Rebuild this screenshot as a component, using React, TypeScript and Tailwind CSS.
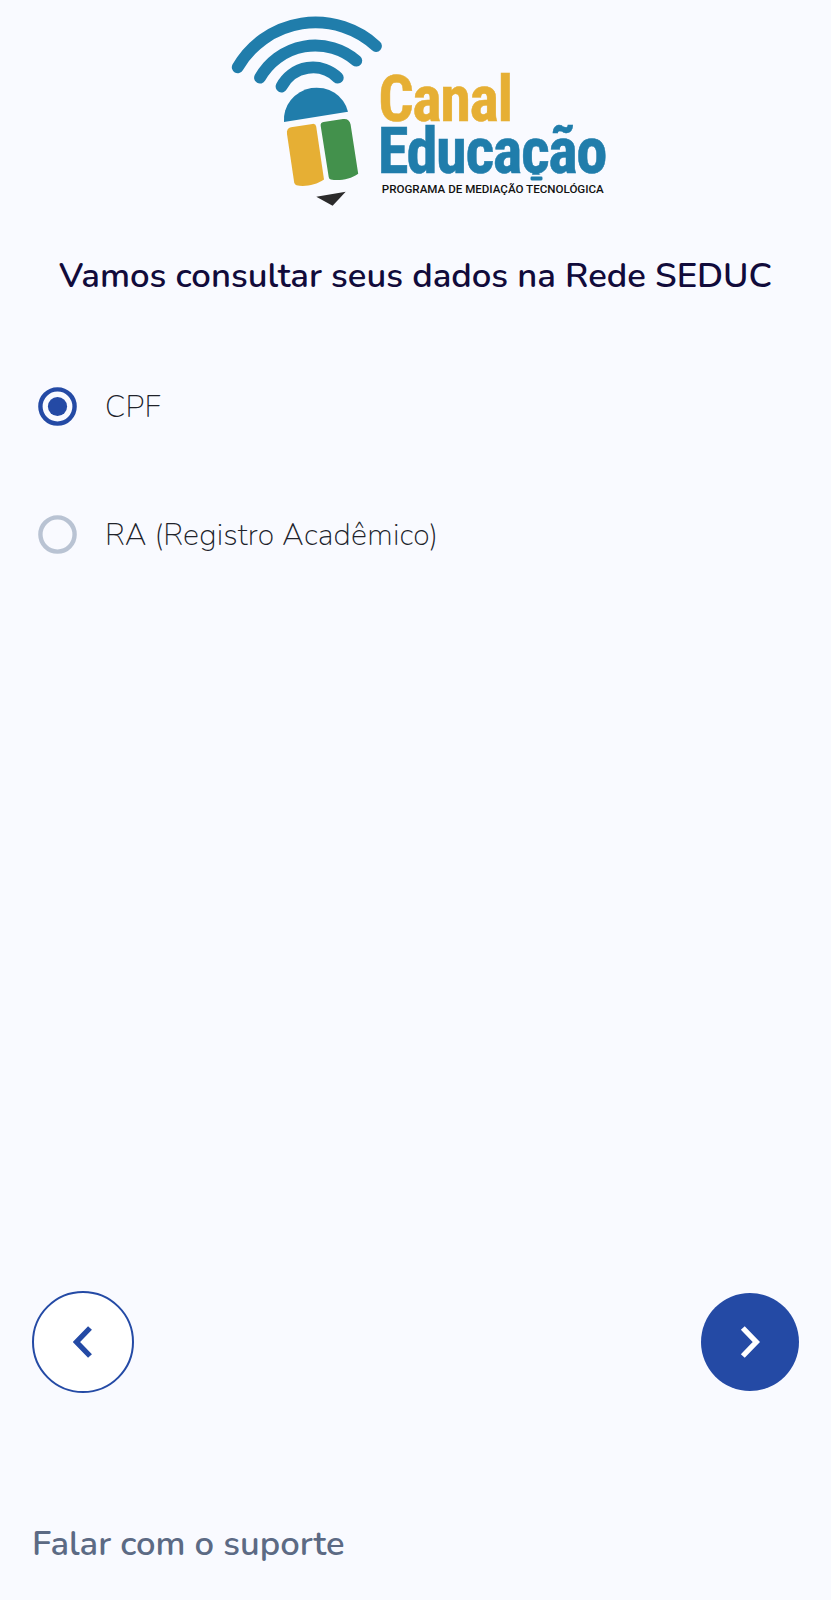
import { useState } from 'react';

interface RadioOptionProps {
  label: string;
  checked: boolean;
  onSelect: () => void;
}

function Logo() {
  return (
    <svg viewBox="225 10 390 204" className="h-[204px] w-[390px] overflow-visible" role="img" aria-label="Canal Educação">
      <defs>
        <clipPath id="wordmark">
          <rect x="370" y="60" width="245" height="114.8" />
        </clipPath>
      </defs>
      {/* Signal waves */}
      <g fill="none" stroke="#207dab" strokeWidth="11.8" strokeLinecap="round">
        <path d="M237.7 67.3A89.8 89.8 0 0 1 376 46" />
        <path d="M260 77.7A63.4 63.4 0 0 1 356.3 60.7" />
        <path d="M281.5 86.5A35.5 35.5 0 0 1 337.8 77.7" />
      </g>
      {/* Pencil */}
      <path d="M284 122.1A32.5 31.4 -9.2 0 1 348 111.7Z" fill="#207dab" />
      <path d="M291 127.3L312.5 123.9Q315.7 123.5 316.2 126.5L324 179.5C316 185 305 187 296.5 185.3Q294.6 184.8 294.2 182.5L287 134Q286.2 128.4 291 127.3Z" fill="#e6af34" />
      <path d="M323.5 122L343 119Q349.5 118.3 350.6 124.5L358.2 173.7C350.5 179.5 339 181 330.8 179.5Q329 179 328.7 177L320.7 126Q320.2 122.5 323.5 122Z" fill="#43914c" />
      <path d="M316.3 196.7L345.7 191.8L332.6 205.8Z" fill="#2b2a2b" />
      {/* Wordmark */}
      <g fontFamily="Roboto, sans-serif">
        <g className="[font-stretch:75%] tracking-[-1.5px]" fontSize="65" fontWeight="700" strokeWidth="0.5" clipPath="url(#wordmark)">
          <text x="378.3" y="121.3" fill="#e6af34" stroke="#e6af34" textLength="133.4" lengthAdjust="spacingAndGlyphs">Canal</text>
          <text x="377.8" y="173.4" fill="#207dab" stroke="#207dab" textLength="228.3" lengthAdjust="spacingAndGlyphs">Educação</text>
        </g>
        {/* Cedilla */}
        <rect x="530.5" y="176.6" width="12" height="3.8" rx="1.3" fill="#207dab" />
        <text x="381.8" y="193.3" fontSize="11.8" fontWeight="500" fill="#111111" textLength="222" lengthAdjust="spacingAndGlyphs">PROGRAMA DE MEDIAÇÃO TECNOLÓGICA</text>
      </g>
    </svg>
  );
}

function RadioOption({ label, checked, onSelect }: RadioOptionProps) {
  return (
    <button type="button" role="radio" aria-checked={checked} onClick={onSelect} className="flex h-10 items-center">
      <svg viewBox="0 0 40 40" className="size-10 shrink-0">
        <circle cx="19.5" cy="19.5" r="17.1" fill="none" stroke={checked ? '#244aa5' : '#b9c3d3'} strokeWidth="4.4" />
        {checked && <circle cx="19.5" cy="19.5" r="9.6" fill="#244aa5" />}
      </svg>
      <span className="ml-[27px] whitespace-nowrap text-[30.4px] leading-10 font-extralight tracking-[0.22px] text-[#20222a]">
        {label}
      </span>
    </button>
  );
}

export default function App() {
  const [selected, setSelected] = useState('cpf');

  return (
    <main className="flex h-[1600px] w-full flex-col bg-[#f9faff] font-['Nunito',Lato,sans-serif]">
      <header className="flex flex-col items-center pt-[10px]">
        <div className="flex w-full pl-[225px]">
          <Logo />
        </div>
        <h1 className="mt-[38px] whitespace-nowrap text-[34.7px] leading-[48px] font-semibold text-[#110b3b]">
          Vamos consultar seus dados na Rede SEDUC
        </h1>
      </header>

      <div role="radiogroup" className="mt-[87px] flex flex-col items-start gap-[88px] pl-[38px]">
        <RadioOption label="CPF" checked={selected === 'cpf'} onSelect={() => setSelected('cpf')} />
        <RadioOption label="RA (Registro Acadêmico)" checked={selected === 'ra'} onSelect={() => setSelected('ra')} />
      </div>

      <footer className="mt-auto pr-8 pb-8 pl-8">
        <nav className="flex items-center justify-between">
          <button
            type="button"
            aria-label="Voltar"
            className="flex size-[102px] items-center justify-center rounded-full border-2 border-[#244aa5] bg-white text-[#244aa5]"
          >
            <svg viewBox="0 0 20 32" className="h-8 w-5" fill="none" stroke="currentColor" strokeWidth="5.4">
              <path d="M17 2L3.5 16L17 30" />
            </svg>
          </button>
          <button type="button" aria-label="Avançar" className="flex size-[98px] items-center justify-center rounded-full bg-[#244aa5] text-white">
            <svg viewBox="0 0 20 32" className="h-8 w-5" fill="none" stroke="currentColor" strokeWidth="5.4">
              <path d="M2.8 2L16.3 16L2.8 30" />
            </svg>
          </button>
        </nav>
        <a href="#suporte" className="mt-[127px] block w-fit text-[34.6px] leading-[48px] font-semibold text-[#5c6a84]">
          Falar com o suporte
        </a>
      </footer>
    </main>
  );
}
